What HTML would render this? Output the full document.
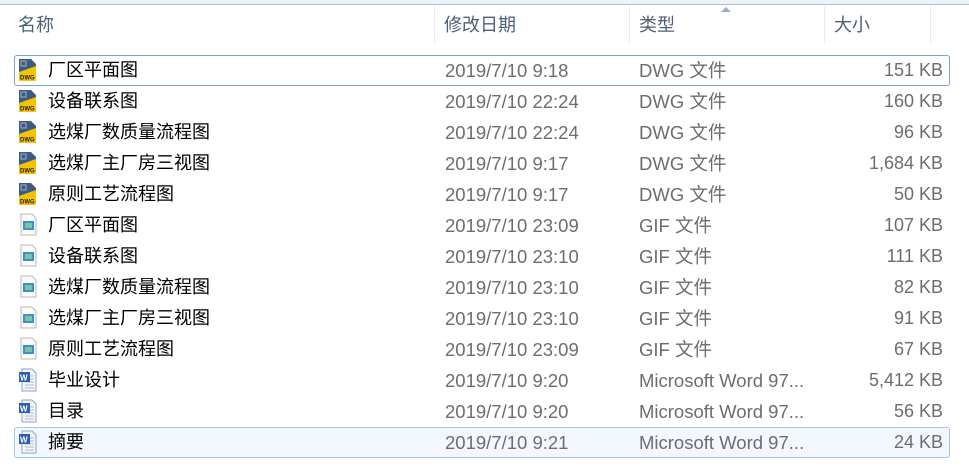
<!DOCTYPE html>
<html><head><meta charset="utf-8"><style>
html,body{margin:0;padding:0;width:969px;height:469px;overflow:hidden;background:#fff;font-family:"Liberation Sans","Noto Sans CJK SC",sans-serif;}
.top{position:absolute;left:0;top:0;width:969px;height:4px;background:#eef3f9;border-bottom:1px solid #a9bcd3;}
.hdr{position:absolute;top:10px;font-size:18px;line-height:30px;color:#4d6078;}
.div{position:absolute;top:6px;height:38px;width:1px;background:#e7ecf2;}
.row{position:absolute;left:0;width:969px;height:31px;font-size:18px;line-height:31px;}
.sel{position:absolute;left:14px;width:934px;height:29px;border:1px solid #7da2ce;border-radius:3px;}
.sel2{border-color:#a9c5e8;background:#f3f8fe;}
.n{position:absolute;left:48px;top:0;color:#000;}
.d{position:absolute;left:445px;top:0;color:#6d6d6d;font-size:18.5px;}
.t{position:absolute;left:639px;top:0;color:#6d6d6d;font-size:18.5px;}
.s{position:absolute;right:26px;top:0;color:#6d6d6d;font-size:18px;}
.ic{position:absolute;left:18px;top:3px;}
</style></head><body>
<div class="top"></div>
<div class="hdr" style="left:18px">名称</div>
<div class="hdr" style="left:444px">修改日期</div>
<div class="hdr" style="left:639px">类型</div>
<div class="hdr" style="left:834px">大小</div>
<div class="div" style="left:434px"></div>
<div class="div" style="left:629px"></div>
<div class="div" style="left:824px"></div>
<div class="div" style="left:930px"></div>
<svg style="position:absolute;left:721px;top:6px" width="10" height="6"><path d="M0 6L5 1L10 6Z" fill="#8fb0d3"/></svg>

<div class="sel" style="top:55px"></div>
<div class="sel sel2" style="top:427px"></div>

<svg width="0" height="0" style="position:absolute"><defs>
<g id="dwg"><path d="M1 1H13L18 6V23H1Z" fill="#3d5a80"/><path d="M1 14L18 8V23H1Z" fill="#f5c400"/><rect x="3" y="3" width="5" height="5" fill="none" stroke="#9fb3cc"/><text x="2" y="21.5" font-size="6" font-weight="bold" fill="#222" font-family="Liberation Sans">DWG</text></g>
<g id="gif"><path d="M3 1H14L18 5V22H3Z" fill="#fafafa" stroke="#b9b9b9"/><rect x="5" y="8" width="11" height="9" fill="#3a8fd8"/><rect x="7" y="10" width="7" height="5" fill="#7ec3a0"/></g>
<g id="doc"><path d="M4 1H14L18 5V23H4Z" fill="#f4f6fa" stroke="#8ea2be"/><path d="M7 8H16M7 11H16M7 14H16M7 17H16M7 20H16" stroke="#a7b8d0"/><rect x="1" y="4" width="11" height="10" fill="#2d5fb3"/><text x="2" y="12.5" font-size="8" font-weight="bold" fill="#fff" font-family="Liberation Sans">W</text></g>
</defs></svg>

<div class="row" style="top:55px"><svg class="ic" width="20" height="24"><use href="#dwg"/></svg><span class="n">厂区平面图</span><span class="d">2019/7/10 9:18</span><span class="t">DWG 文件</span><span class="s">151 KB</span></div>
<div class="row" style="top:86px"><svg class="ic" width="20" height="24"><use href="#dwg"/></svg><span class="n">设备联系图</span><span class="d">2019/7/10 22:24</span><span class="t">DWG 文件</span><span class="s">160 KB</span></div>
<div class="row" style="top:117px"><svg class="ic" width="20" height="24"><use href="#dwg"/></svg><span class="n">选煤厂数质量流程图</span><span class="d">2019/7/10 22:24</span><span class="t">DWG 文件</span><span class="s">96 KB</span></div>
<div class="row" style="top:148px"><svg class="ic" width="20" height="24"><use href="#dwg"/></svg><span class="n">选煤厂主厂房三视图</span><span class="d">2019/7/10 9:17</span><span class="t">DWG 文件</span><span class="s">1,684 KB</span></div>
<div class="row" style="top:179px"><svg class="ic" width="20" height="24"><use href="#dwg"/></svg><span class="n">原则工艺流程图</span><span class="d">2019/7/10 9:17</span><span class="t">DWG 文件</span><span class="s">50 KB</span></div>
<div class="row" style="top:210px"><svg class="ic" width="20" height="24"><use href="#gif"/></svg><span class="n">厂区平面图</span><span class="d">2019/7/10 23:09</span><span class="t">GIF 文件</span><span class="s">107 KB</span></div>
<div class="row" style="top:241px"><svg class="ic" width="20" height="24"><use href="#gif"/></svg><span class="n">设备联系图</span><span class="d">2019/7/10 23:10</span><span class="t">GIF 文件</span><span class="s">111 KB</span></div>
<div class="row" style="top:272px"><svg class="ic" width="20" height="24"><use href="#gif"/></svg><span class="n">选煤厂数质量流程图</span><span class="d">2019/7/10 23:10</span><span class="t">GIF 文件</span><span class="s">82 KB</span></div>
<div class="row" style="top:303px"><svg class="ic" width="20" height="24"><use href="#gif"/></svg><span class="n">选煤厂主厂房三视图</span><span class="d">2019/7/10 23:10</span><span class="t">GIF 文件</span><span class="s">91 KB</span></div>
<div class="row" style="top:334px"><svg class="ic" width="20" height="24"><use href="#gif"/></svg><span class="n">原则工艺流程图</span><span class="d">2019/7/10 23:09</span><span class="t">GIF 文件</span><span class="s">67 KB</span></div>
<div class="row" style="top:365px"><svg class="ic" width="20" height="24"><use href="#doc"/></svg><span class="n">毕业设计</span><span class="d">2019/7/10 9:20</span><span class="t">Microsoft Word 97...</span><span class="s">5,412 KB</span></div>
<div class="row" style="top:396px"><svg class="ic" width="20" height="24"><use href="#doc"/></svg><span class="n">目录</span><span class="d">2019/7/10 9:20</span><span class="t">Microsoft Word 97...</span><span class="s">56 KB</span></div>
<div class="row" style="top:427px"><svg class="ic" width="20" height="24"><use href="#doc"/></svg><span class="n">摘要</span><span class="d">2019/7/10 9:21</span><span class="t">Microsoft Word 97...</span><span class="s">24 KB</span></div>
</body></html>
